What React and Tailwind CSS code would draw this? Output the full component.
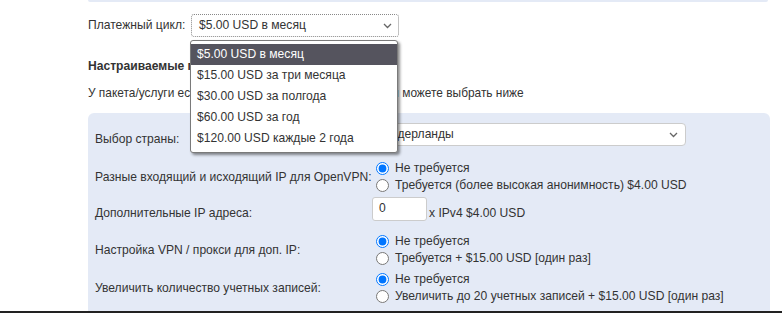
import React from "react";

function Chevron({ className = "" }) {
  return (
    <svg width="9" height="6" viewBox="0 0 9 6" className={className}>
      <polyline points="1,1 4.5,4.5 8,1" fill="none" stroke="#666" strokeWidth="1.3" />
    </svg>
  );
}

function Radio({ checked, label, group }) {
  return (
    <label className="flex items-center h-[17px]">
      <input type="radio" defaultChecked={checked} className="m-0 ml-[4px] w-[13px] h-[13px]" name={group} />
      <span className="ml-[6px]">{label}</span>
    </label>
  );
}

const options = [
  "$5.00 USD в месяц",
  "$15.00 USD за три месяца",
  "$30.00 USD за полгода",
  "$60.00 USD за год",
  "$120.00 USD каждые 2 года",
];

export default function App() {
  return (
    <div className="w-[782px] h-[313px] bg-white overflow-hidden font-['Liberation_Sans',Arial,sans-serif] text-[12.1px] leading-[15px] text-[#333]">
      <div className="h-[311px] overflow-hidden pl-[88px]">
        <div className="h-[2px] w-[680px] bg-[#e4eaf6] rounded-b-[4px]" />
        <div className="mt-[12px] flex items-center h-[23px]">
          <span className="w-[100px]">Платежный цикл:</span>
          <div className="relative ml-[3px] w-[208px] h-[23px]">
            <div className="h-full w-full border border-dotted border-[#888] rounded-[3px] bg-white flex items-center pl-[7px] pr-[6px] justify-between">
              <span>$5.00 USD в месяц</span>
              <Chevron />
            </div>
            <div className="absolute left-[-1px] top-[26px] w-[208px] bg-white border border-[#7a7a7a] rounded-[3px] py-[3px] shadow-[2px_2px_3px_rgba(0,0,0,0.45)] z-10">
              {options.map((o, i) => (
                <div
                  key={o}
                  className={
                    "h-[21px] flex items-center pl-[6px] " +
                    (i === 0 ? "bg-[#55545e] text-white" : "text-[#333]")
                  }
                >
                  {o}
                </div>
              ))}
            </div>
          </div>
        </div>
        <div className="mt-[22px] font-bold">Настраиваемые параметры</div>
        <div className="mt-[12px] text-[11.9px]">У пакета/услуги есть настраиваемые опции, которые вы можете выбрать ниже</div>
        <div className="mt-[12px] w-[682px] h-[300px] bg-[#e4eaf6] rounded-t-[6px] pl-[7px] pt-[10px]">
          <div className="flex items-start">
            <div className="w-[277px] mt-[9px]">Выбор страны:</div>
            <div className="ml-[1px] w-[313px] h-[23px] bg-white border border-[#ccc] rounded-[4px] flex items-center justify-between pl-[8px] pr-[7px]">
              <span>Нидерланды</span>
              <Chevron />
            </div>
          </div>
          <div className="flex items-center mt-[13px]">
            <div className="w-[277px] whitespace-nowrap">Разные входящий и исходящий IP для OpenVPN:</div>
            <div className="flex flex-col">
              <Radio checked group="g1" label="Не требуется" />
              <Radio group="g1" label="Требуется (более высокая анонимность) $4.00 USD" />
            </div>
          </div>
          <div className="flex items-start mt-[3px]">
            <div className="w-[277px] mt-[9px]">Дополнительные IP адреса:</div>
            <div className="w-[55px] h-[24px] bg-white border border-[#ccc] rounded-[3px] pl-[6px] pt-[3px]">0</div>
            <div className="ml-[2px] mt-[9px]">x IPv4 $4.00 USD</div>
          </div>
          <div className="flex items-center mt-[12px]">
            <div className="w-[277px]">Настройка VPN / прокси для доп. IP:</div>
            <div className="flex flex-col">
              <Radio checked group="g2" label="Не требуется" />
              <Radio group="g2" label="Требуется + $15.00 USD [один раз]" />
            </div>
          </div>
          <div className="flex items-center mt-[4px]">
            <div className="w-[277px]">Увеличить количество учетных записей:</div>
            <div className="flex flex-col">
              <Radio checked group="g3" label="Не требуется" />
              <Radio group="g3" label="Увеличить до 20 учетных записей + $15.00 USD [один раз]" />
            </div>
          </div>
        </div>
      </div>
      <div className="h-[2px] bg-[#222]" />
    </div>
  );
}
